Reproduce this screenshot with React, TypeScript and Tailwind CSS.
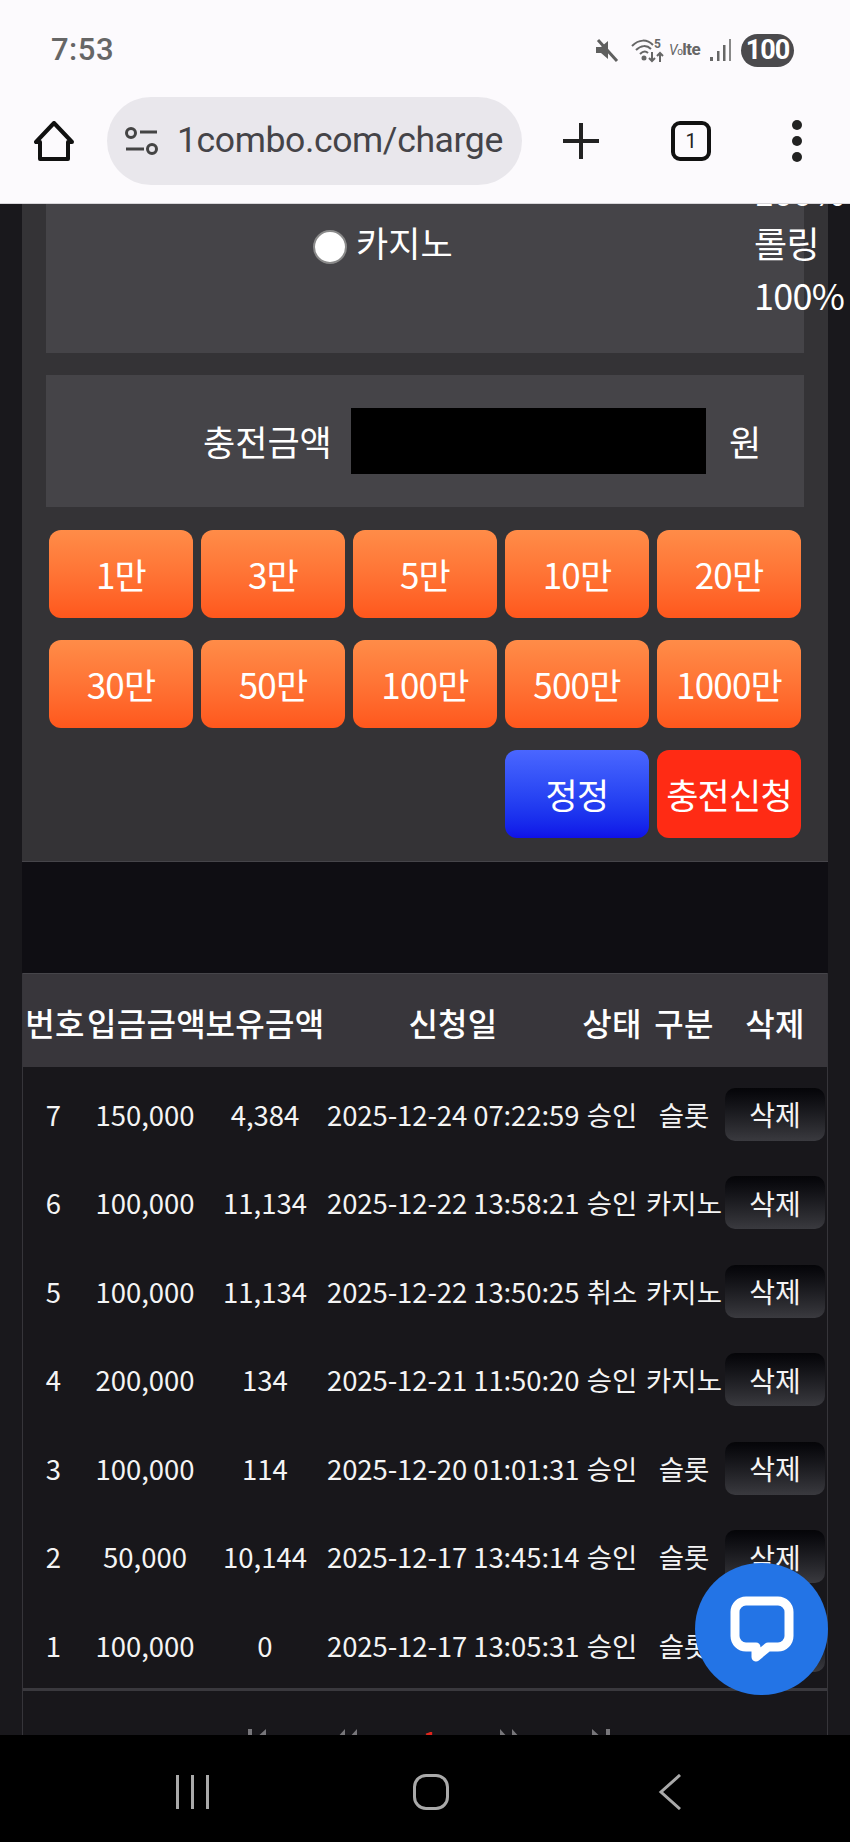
const font = { fontFamily: '"Noto Sans CJK KR", "Noto Sans", sans-serif' };

const amountRows = [
  ['1만', '3만', '5만', '10만', '20만'],
  ['30만', '50만', '100만', '500만', '1000만'],
];

const rows = [
  ['7', '150,000', '4,384', '2025-12-24 07:22:59', '승인', '슬롯'],
  ['6', '100,000', '11,134', '2025-12-22 13:58:21', '승인', '카지노'],
  ['5', '100,000', '11,134', '2025-12-22 13:50:25', '취소', '카지노'],
  ['4', '200,000', '134', '2025-12-21 11:50:20', '승인', '카지노'],
  ['3', '100,000', '114', '2025-12-20 01:01:31', '승인', '슬롯'],
  ['2', '50,000', '10,144', '2025-12-17 13:45:14', '승인', '슬롯'],
  ['1', '100,000', '0', '2025-12-17 13:05:31', '승인', '슬롯'],
];

const cols = 'grid grid-cols-[64px_116px_124px_252px_66px_78px_1fr] items-center text-center';

function StatusIcons() {
  return (
    <div className="flex items-center">
      <svg width="24" height="25" viewBox="0 0 24 25" className="mr-[12px]">
        <path d="M1 9h5l7-6v18l-7-6H1z" fill="#5f5f5f" />
        <path d="M3 2l19 21" stroke="#5f5f5f" strokeWidth="3" />
      </svg>
      <svg width="34" height="26" viewBox="0 0 34 26" className="mr-[4px]" fill="none" stroke="#666" strokeWidth="2">
        <path d="M1 9c7-7 15-7 21-1" />
        <path d="M5 13c5-5 11-5 15-1" />
        <path d="M9 17c3-3 6-3 8-1" />
        <circle cx="13" cy="21" r="1.5" fill="#666" />
        <path d="M21 15v9M18 21l3 3 3-3M29 25v-9M26 19l3-3 3 3" />
        <text x="23" y="11" fontSize="12" fontWeight="700" fill="#666" stroke="none" style={{ fontFamily: 'Roboto, sans-serif' }}>5</text>
      </svg>
      <span className="text-[17px] font-bold text-[#666] mr-[8px] w-[32px] whitespace-nowrap tracking-[-0.5px]" style={{ fontFamily: 'Roboto, sans-serif' }}>
        <span className="italic font-normal text-[14px]">V</span>
        <span className="text-[10px] font-normal">o</span>lte
      </span>
      <svg width="24" height="24" viewBox="0 0 24 24" fill="#666" className="mr-[8px]">
        <rect x="1" y="19" width="3" height="4" />
        <rect x="8" y="13" width="2.5" height="10" />
        <rect x="14" y="7" width="2.5" height="16" />
        <rect x="20" y="1" width="2" height="22" fill="#888" />
      </svg>
      <div className="w-[53px] h-[33px] rounded-full bg-[#4b4a4d] text-white text-[27px] font-bold flex items-center justify-center tracking-[-1px]" style={{ fontFamily: 'Roboto, sans-serif' }}>
        100
      </div>
    </div>
  );
}

function BrowserBar() {
  return (
    <div className="flex items-center h-[88px] mt-[-3px]">
      <svg width="40" height="40" viewBox="0 0 40 40" fill="none" stroke="#111" strokeWidth="4" strokeLinejoin="round" className="ml-[34px]">
        <path d="M20 2L2 21h4v17h28V21h4z" />
      </svg>
      <div className="ml-[33px] w-[415px] h-[88px] rounded-full bg-[#e9e7ec] flex items-center overflow-hidden">
        <svg width="34" height="30" viewBox="0 0 34 30" fill="none" stroke="#444" strokeWidth="3" className="ml-[18px] shrink-0">
          <circle cx="6" cy="7" r="4.5" />
          <path d="M15 6h17M1 23h18" />
          <circle cx="27" cy="23" r="4.5" />
        </svg>
        <span className="ml-[18px] text-[35.6px] text-[#454448] tracking-[-0.4px] whitespace-nowrap w-[328px] overflow-hidden" style={{ fontFamily: 'Roboto, sans-serif' }}>
          1combo.com/charge.
        </span>
      </div>
      <svg width="38" height="38" viewBox="0 0 38 38" stroke="#222" strokeWidth="4" className="ml-[40px]">
        <path d="M19 1v36M1 19h36" />
      </svg>
      <div className="ml-[71px] w-[40px] h-[40px] border-[4px] border-[#111] rounded-[9px] flex items-center justify-center text-[20px] text-[#222]" style={{ fontFamily: 'Roboto, sans-serif' }}>
        1
      </div>
      <div className="ml-[81px] flex flex-col gap-[6px]">
        <div className="w-[10px] h-[10px] rounded-full bg-[#222]" />
        <div className="w-[10px] h-[10px] rounded-full bg-[#222]" />
        <div className="w-[10px] h-[10px] rounded-full bg-[#222]" />
      </div>
    </div>
  );
}

function AmountButton({ label, className }: { label: string; className?: string }) {
  return (
    <button className={`h-[88px] rounded-[12px] text-white text-[35px] tracking-[-0.8px] flex items-center justify-center whitespace-nowrap ${className ?? 'bg-gradient-to-b from-[#ff8c48] to-[#ff571c]'}`}>
      {label}
    </button>
  );
}

function PagerIcon({ d, className }: { d: string; className: string }) {
  return (
    <svg width="22" height="20" viewBox="0 0 22 20" fill="#77767a" className={className}>
      <path d={d} />
    </svg>
  );
}

function Pager() {
  return (
    <div className="flex items-start pt-[38px] h-[60px]">
      <PagerIcon className="ml-[224px]" d="M1 0h4v20H1zM19 0v20L8 10z" />
      <PagerIcon className="ml-[67px]" d="M9 0v20L0 10zM21 0v20L12 10z" />
      <span className="ml-[64px] w-[16px] text-center text-[27px] leading-none text-[#e0261c] -mt-[3px]">1</span>
      <PagerIcon className="ml-[62px]" d="M0 0v20l9-10zM12 0v20l9-10z" />
      <PagerIcon className="ml-[68px]" d="M2 0v20l11-10zM16 0h4v20h-4z" />
    </div>
  );
}

export default function App() {
  return (
    <div className="w-[850px] h-[1842px] flex flex-col overflow-hidden bg-black" style={font}>
      <header className="h-[204px] shrink-0 bg-[#fcfafd] border-b border-[#d8d6da]">
        <div className="h-[100px] flex items-center justify-between pl-[51px] pr-[56px]">
          <span className="text-[31px] font-medium text-[#666] tracking-[0.5px]" style={{ fontFamily: 'Roboto, sans-serif' }}>7:53</span>
          <StatusIcons />
        </div>
        <BrowserBar />
      </header>

      <main className="h-[1531px] shrink-0 bg-[#19181c] px-[22px] overflow-hidden relative">
        <section className="bg-[#343336] px-[24px] h-[658px] border-b border-[#46454a]">
          <div className="h-[149px] bg-[#454448] flex text-white text-[35px]">
            <div className="pl-[267px] pt-[15px] flex items-center h-[61px] gap-[9px]">
              <span className="w-[34px] h-[34px] rounded-full bg-white border-2 border-[#8a8a8a] mt-[9px]" />
              <span>카지노</span>
            </div>
            <div className="ml-auto -mr-[38px] -mt-[40px] w-[88px] leading-[52px] text-[36px] tracking-[-0.7px] whitespace-nowrap">
              <div>100%</div>
              <div>롤링</div>
              <div>100%</div>
            </div>
          </div>

          <div className="mt-[22px] h-[132px] bg-[#454448] flex items-center text-white text-[35px]">
            <span className="ml-[157px] w-[126px] whitespace-nowrap">충전금액</span>
            <div className="ml-[22px] w-[355px] h-[66px] bg-black" />
            <span className="ml-[23px]">원</span>
          </div>

          <div className="mt-[23px] px-[3px] flex flex-col gap-[22px]">
            {amountRows.map((row, i) => (
              <div key={i} className="grid grid-cols-5 gap-x-[8px]">
                {row.map((label) => (
                  <AmountButton key={label} label={label} />
                ))}
              </div>
            ))}
            <div className="grid grid-cols-5 gap-x-[8px]">
              <AmountButton label="정정" className="col-start-4 bg-gradient-to-b from-[#4a66ff] to-[#1010e8]" />
              <AmountButton label="충전신청" className="bg-[#ff2b14]" />
            </div>
          </div>
        </section>

        <div className="h-[111px] bg-[#0f0e13]" />

        <section className="border-x border-[#36353a] bg-[#18171b] text-white">
          <div className={`${cols} h-[94px] pt-[3px] bg-[#38363b] border-t border-[#46454a] text-[32px] font-medium whitespace-nowrap tracking-[0.3px]`}>
            <div>번호</div>
            <div>입금금액</div>
            <div>보유금액</div>
            <div>신청일</div>
            <div>상태</div>
            <div>구분</div>
            <div>삭제</div>
          </div>
          <div className="h-[623.5px] pt-[3px] border-b-[3px] border-[#3a393e]">
            {rows.map((row) => (
              <div key={row[0]} className={`${cols} h-[88.5px] text-[27.5px] text-[#f4f4f4] whitespace-nowrap`}>
                {row.map((cell, i) => (
                  <div key={i} className={i === 0 ? 'pr-[3px]' : i === 3 ? 'tracking-[-0.1px]' : ''}>{cell}</div>
                ))}
                <div className="flex justify-end pr-[2px]">
                  <button className="w-[100px] h-[53px] rounded-[10px] bg-gradient-to-b from-[#050508] to-[#3a3a3f] text-[28px] text-[#f4f4f4]">
                    삭제
                  </button>
                </div>
              </div>
            ))}
          </div>
          <Pager />
        </section>

        <button className="absolute left-[695px] top-[1359px] w-[133px] h-[132px] rounded-full bg-[#2374e6] flex items-center justify-center">
          <svg width="64" height="66" viewBox="0 0 64 66" fill="none">
            <path
              d="M16 5h32a11 11 0 0 1 11 11v24a11 11 0 0 1-11 11H38L26 61v-10H16A11 11 0 0 1 5 40V16A11 11 0 0 1 16 5z"
              stroke="#fff"
              strokeWidth="9"
              strokeLinejoin="round"
            />
          </svg>
        </button>
      </main>

      <nav className="h-[107px] shrink-0 bg-black flex items-start pt-[40px]">
        <div className="ml-[176px] flex gap-[12px]">
          <div className="w-[3px] h-[34px] bg-[#a9a9a9]" />
          <div className="w-[3px] h-[34px] bg-[#a9a9a9]" />
          <div className="w-[3px] h-[34px] bg-[#a9a9a9]" />
        </div>
        <div className="ml-[204px] w-[36px] h-[36px] border-[3px] border-[#a9a9a9] rounded-[13px] -mt-[1px]" />
        <svg width="24" height="36" viewBox="0 0 24 36" fill="none" stroke="#a9a9a9" strokeWidth="3" className="ml-[209px] -mt-[1px]">
          <path d="M22 1L3 18l19 17" />
        </svg>
      </nav>
    </div>
  );
}
